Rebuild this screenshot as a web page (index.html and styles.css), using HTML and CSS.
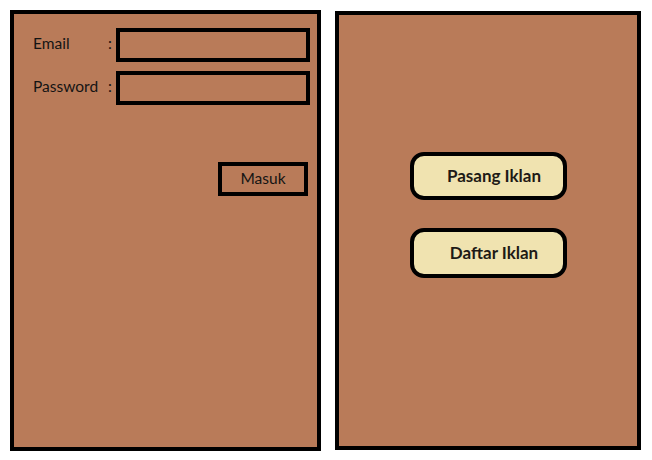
FILE: index.html
```html
<!DOCTYPE html>
<html>
<head>
    <meta charset="UTF-8">
    <title>Iklan</title>
    <link rel="stylesheet" href="styles.css">
</head>
<body>
    <div class="page">
        <!-- panel login -->
        <div class="panel login-panel">
            <div class="form-row">
                <label class="form-label" for="email">Email</label>
                <span class="colon">:</span>
                <input class="form-input" id="email" type="text">
            </div>
            <div class="form-row">
                <label class="form-label" for="password">Password</label>
                <span class="colon">:</span>
                <input class="form-input" id="password" type="password">
            </div>
            <div class="actions">
                <button class="masuk-btn">Masuk</button>
            </div>
        </div>

        <!-- panel menu iklan -->
        <div class="panel menu-panel">
            <button class="menu-btn">Pasang Iklan</button>
            <button class="menu-btn daftar">Daftar Iklan</button>
        </div>
    </div>
</body>
</html>
```

FILE: styles.css
```css
/* halaman */
body {
    margin: 0;
    background-color: #ffffff;
    font-family: Lato, "Open Sans", sans-serif;
    color: #141414;
}

.page {
    display: flex;
    align-items: flex-start;
    gap: 14px;
    padding: 10px 0 0 10px;
}

/* panel coklat */
.panel {
    box-sizing: border-box;
    background-color: #b97b59;
    border: 4px solid #000;
}

.login-panel {
    width: 311px;
    height: 441px;
    padding: 14px 7px 0 19px;
}

.menu-panel {
    width: 306px;
    height: 439px;
    margin-top: 1px;
    display: flex;
    flex-direction: column;
    align-items: center;
    gap: 28px;
    padding-top: 137px;
}

/* baris form */
.form-row {
    display: flex;
    align-items: center;
    margin-bottom: 9px;
}

.form-label {
    width: 75px;
    font-size: 15.5px;
    margin-top: -5px;
}

.colon {
    width: 8px;
    font-size: 15.5px;
    margin-top: -5px;
}

.form-input {
    box-sizing: border-box;
    width: 194px;
    height: 34px;
    margin: 0;
    border: 4px solid #000;
    background-color: transparent;
    outline: none;
}

/* tombol masuk */
.actions {
    display: flex;
    justify-content: flex-end;
    padding-right: 2px;
    margin-top: 57px;
}

.masuk-btn {
    box-sizing: border-box;
    width: 90px;
    height: 34px;
    border: 4px solid #000;
    background-color: transparent;
    font-family: Lato, "Open Sans", sans-serif;
    font-size: 15.5px;
    color: #141414;
    padding: 0 0 3px 0;
}

/* tombol menu */
.menu-btn {
    box-sizing: border-box;
    width: 157px;
    height: 48px;
    border: 4px solid #000;
    border-radius: 14px;
    background-color: #f0e3b0;
    font-family: Lato, "Open Sans", sans-serif;
    font-size: 17px;
    font-weight: bold;
    color: #1e1a16;
    padding: 0 0 2px 12px;
}

.daftar {
    height: 50px;
}
```
